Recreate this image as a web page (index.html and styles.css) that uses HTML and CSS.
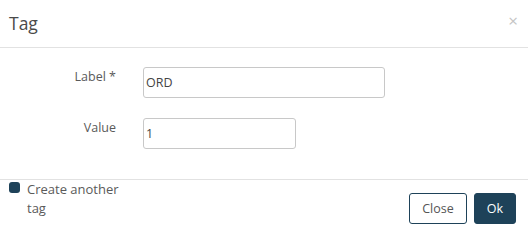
FILE: index.html
```html
<!DOCTYPE html>
<html lang="en-US">
<head>
<meta charset="utf-8">
<link rel="stylesheet" href="styles.css">
</head>
<body>

<div class="modal">
  <div class="modal-header">
    <h4 class="modal-title">Tag</h4>
    <span class="close">&times;</span>
  </div>

  <div class="modal-body">
    <div class="form-row">
      <label class="form-label">Label *</label>
      <input type="text" class="form-input wide" value="ORD">
    </div>
    <div class="form-row">
      <label class="form-label">Value</label>
      <input type="text" class="form-input narrow" value="1">
    </div>
  </div>

  <div class="modal-footer">
    <label class="another">
      <span class="check"></span>
      <span class="another-text">Create another tag</span>
    </label>
    <div class="buttons">
      <button class="btn btn-default">Close</button>
      <button class="btn btn-primary">Ok</button>
    </div>
  </div>
</div>

</body>
</html>
```

FILE: styles.css
```css
body {
    margin: 0;
    font-family: "Open Sans", Arial, Helvetica, sans-serif;
    color: #5A5A5A;
    background-color: #FFFFFF;
}
.modal {
    width: 528px;
    height: 233px;
    display: flex;
    flex-direction: column;
}
.modal-header {
    height: 47px;
    border-bottom: 1px solid #E2E2E2;
    display: flex;
    align-items: center;
    justify-content: space-between;
    padding: 0 10px 0 9px;
}
.modal-title {
    margin: 0;
    font-size: 17.5px;
    font-weight: normal;
    color: #4A4A4A;
    padding-bottom: 2px;
}
.close {
    font-size: 17px;
    color: #C4C4C4;
    padding-bottom: 6px;
}
.modal-body {
    padding: 19px 0 30px 0;
    display: flex;
    flex-direction: column;
    gap: 20px;
}
.form-row {
    display: flex;
    align-items: flex-start;
    gap: 27px;
}
.form-label {
    width: 116px;
    text-align: right;
    font-size: 12.5px;
    line-height: 16px;
    padding-top: 2px;
}
.form-input {
    box-sizing: border-box;
    height: 31px;
    border: 1px solid #C8C8C8;
    border-radius: 3px;
    padding: 0 2px;
    font-family: "Open Sans", Arial, sans-serif;
    font-size: 12.5px;
    color: #444444;
}
.wide {
    width: 242px;
}
.narrow {
    width: 153px;
}
.modal-footer {
    border-top: 1px solid #E2E2E2;
    flex: 1;
    display: flex;
    justify-content: space-between;
    padding: 0 12px 0 9px;
}
.another {
    display: flex;
    align-items: flex-start;
    gap: 7px;
    width: 125px;
    font-size: 13px;
    line-height: 19px;
}
.check {
    flex: none;
    width: 11px;
    height: 11px;
    margin-top: 2px;
    border-radius: 3px;
    background-color: #1E4259;
}
.buttons {
    display: flex;
    gap: 7px;
    padding-top: 13px;
}
.btn {
    height: 31px;
    border-radius: 3px;
    font-family: "Open Sans", Arial, sans-serif;
    font-size: 12.5px;
    padding: 0 10px;
}
.btn-default {
    width: 58px;
    background-color: #FFFFFF;
    border: 1px solid #1E4259;
    color: #555555;
}
.btn-primary {
    width: 42px;
    background-color: #1E4259;
    border: 1px solid #1E4259;
    color: #FFFFFF;
}
```
